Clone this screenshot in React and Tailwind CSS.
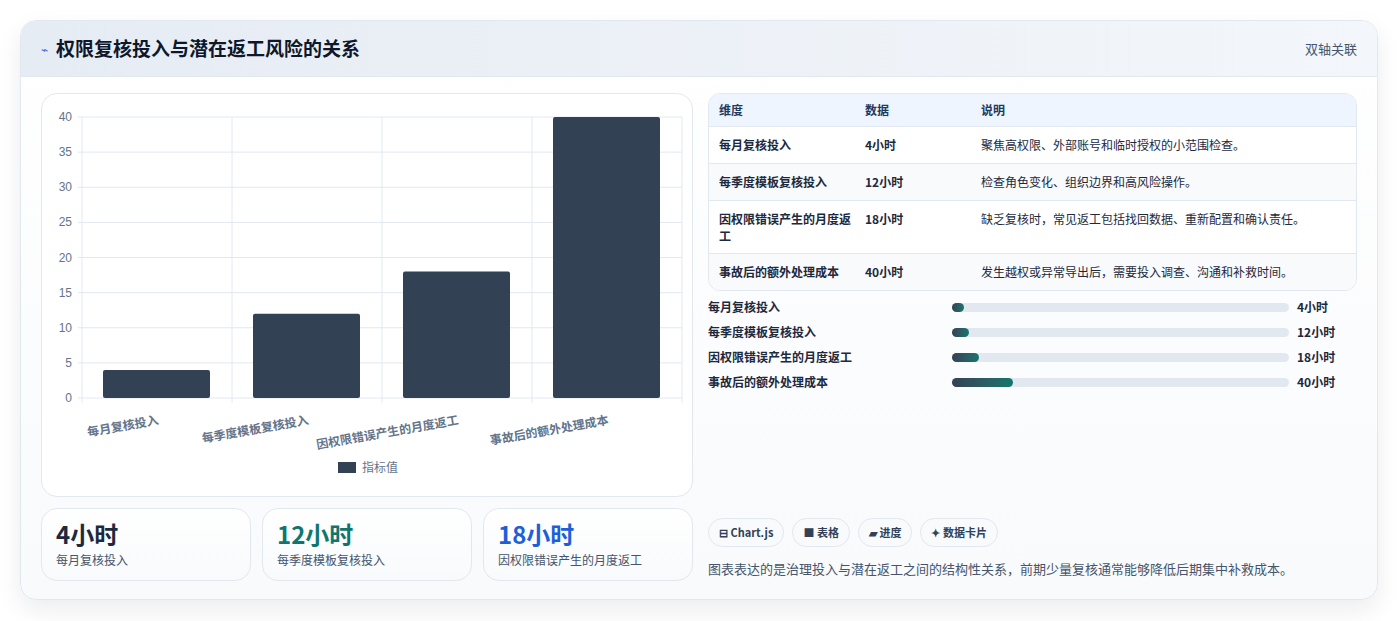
export default function App(){
const rows=[["每月复核投入","4小时","聚焦高权限、外部账号和临时授权的小范围检查。"],["每季度模板复核投入","12小时","检查角色变化、组织边界和高风险操作。"],["因权限错误产生的月度返工","18小时","缺乏复核时，常见返工包括找回数据、重新配置和确认责任。"],["事故后的额外处理成本","40小时","发生越权或异常导出后，需要投入调查、沟通和补救时间。"]];
const vals=[4,12,18,40];
const y=v=>397-v*7.025;
return <div className="w-[1399px] h-[621px] bg-white pt-5 px-5" style={{fontFamily:'"Noto Sans CJK SC","Noto Sans",sans-serif'}}>
<div className="w-[1358px] h-[580px] rounded-2xl border border-slate-200 bg-gradient-to-b from-white to-slate-50 shadow-[0_10px_24px_rgba(15,23,42,0.08)] overflow-hidden">
<div className="h-[56px] flex items-center justify-between px-5 bg-gradient-to-r from-[#e6ecf4] to-[#f3f6fa] border-b border-slate-200">
<div className="flex items-center gap-2"><span className="text-[#3b6fd8] text-xs">⌁</span><span className="text-[19px] font-bold text-slate-900">权限复核投入与潜在返工风险的关系</span></div>
<span className="text-[13px] text-slate-600">双轴关联</span></div>
<div className="flex gap-[15px] px-5 pt-[16px]">
<div className="w-[652px] flex flex-col gap-[11px]">
<div className="h-[404px] rounded-2xl border border-slate-200 bg-white relative">
<svg width="652" height="404" className="absolute left-0 top-0" style={{fontFamily:'"Liberation Sans",sans-serif'}}>
{[0,5,10,15,20,25,30,35,40].map(v=><g key={v}><line x1="36" x2="640" y1={y(v)-93} y2={y(v)-93} stroke="#e2e8f0"/><text x="30" y={y(v)-89} fontSize="12" fill="#64748b" textAnchor="end">{v}</text></g>)}
{[0,1,2,3,4].map(i=><line key={i} x1={40+i*150} x2={40+i*150} y1="23" y2="309" stroke="#e2e8f0"/>)}
{vals.map((v,i)=><rect key={i} x={61+i*150} y={y(v)-93} width="107" height={v*7.025} rx="2" fill="#334155"/>)}
{["每月复核投入","每季度模板复核投入","因权限错误产生的月度返工","事故后的额外处理成本"].map((t,i)=><text key={i} x={117+i*150} y={330} fontSize="12" fontWeight="bold" fill="#64748b" textAnchor="end" transform={`rotate(-10 ${117+i*150} 330)`} style={{fontFamily:'"Noto Sans CJK SC",sans-serif'}}>{t}</text>)}
<rect x="296" y="368" width="18" height="11" fill="#334155"/><text x="320" y="378" fontSize="12" fill="#64748b" style={{fontFamily:'"Noto Sans CJK SC",sans-serif'}}>指标值</text>
</svg></div>
<div className="flex gap-[11px]">
{[["4小时","每月复核投入","text-slate-800"],["12小时","每季度模板复核投入","text-[#0f766e]"],["18小时","因权限错误产生的月度返工","text-[#1d5fd8]"]].map(([a,b,c])=><div key={b} className="flex-1 h-[73px] rounded-2xl border border-slate-200 bg-gradient-to-b from-white to-slate-50 px-[14px] pt-[8px]"><div className={`text-[24px] font-bold leading-[34px] ${c}`}>{a}</div><div className="text-[12px] text-slate-600">{b}</div></div>)}
</div></div>
<div className="flex-1 flex flex-col">
<div className="rounded-xl border border-slate-200 overflow-hidden bg-white text-[12px] text-slate-800">
<div className="flex h-[33px] items-center bg-[#eef5fe] font-bold text-[#1e3a5f] border-b border-slate-200"><div className="w-[156px] pl-[10px]">维度</div><div className="w-[116px]">数据</div><div>说明</div></div>
{rows.map((r,i)=><div key={i} className={`flex py-[9px] ${i<3?'border-b border-slate-200':''} ${i%2?'bg-slate-50':''}`}><div className="w-[156px] pl-[10px] pr-3 font-semibold leading-[17px]">{r[0]}</div><div className="w-[116px] font-semibold">{r[1]}</div><div>{r[2]}</div></div>)}
</div>
<div className="mt-[8px] flex flex-col gap-[9px]">
{rows.map((r,i)=><div key={i} className="flex items-center h-[16px] text-[12px] font-semibold text-slate-800"><div className="w-[244px]">{r[0]}</div><div className="w-[337px] h-[9px] rounded-full bg-slate-200"><div className="h-full rounded-full bg-gradient-to-r from-[#334155] to-[#0f766e]" style={{width:`${[3.5,5,8,18][i]}%`}}/></div><div className="ml-2">{r[1]}</div></div>)}
</div>
<div className="mt-auto flex gap-[8px] text-[11px] font-semibold text-slate-700">
{["⊟ Chart.js","■ 表格","▰ 进度","✦ 数据卡片"].map(t=><span key={t} className="h-[29px] px-[10px] rounded-full border border-slate-200 bg-slate-50 flex items-center">{t}</span>)}
</div>
<div className="mt-[12px] text-[13px] text-slate-600 pb-[3px]">图表表达的是治理投入与潜在返工之间的结构性关系，前期少量复核通常能够降低后期集中补救成本。</div>
</div></div></div></div>;}
